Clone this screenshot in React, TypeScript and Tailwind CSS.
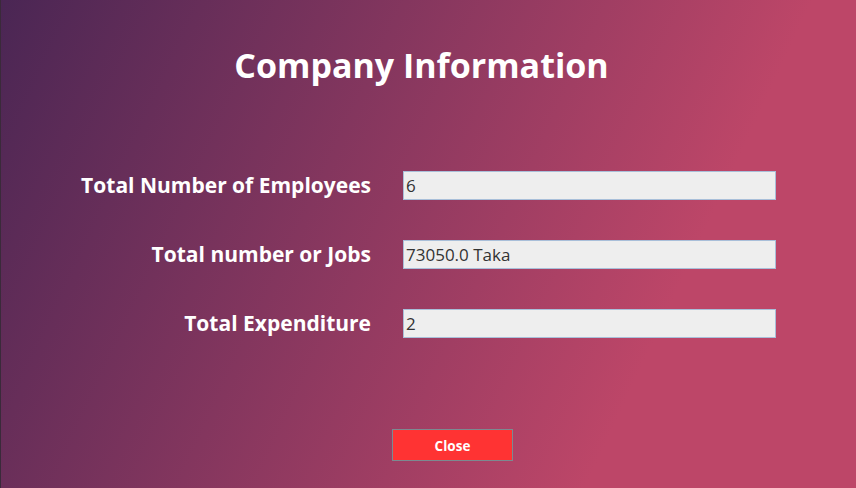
import React from "react";

const font = { fontFamily: '"Open Sans", "Noto Sans", sans-serif' };

function Row({ label, value }: { label: string; value: string }) {
  return (
    <div className="flex items-center h-[29px]">
      <div className="w-[370px] text-right text-white font-bold text-[21px] leading-none tracking-[0px]">
        {label}
      </div>
      <div className="ml-[32px] w-[373px] h-[29px] bg-[#eeeeee] border border-[#a9bfd9] flex items-center pl-[2px] text-[17px] text-[#333333]">
        {value}
      </div>
    </div>
  );
}

export default function App() {
  return (
    <div
      className="w-[856px] h-[488px] overflow-hidden border-l border-[#3a2a3a] bg-[linear-gradient(115deg,#4a2654_0%,#bd4668_75%)] flex flex-col"
      style={font}
    >
      <div className="mt-[42px] h-[46px] flex justify-center pr-[14px]">
        <h1 className="text-white font-bold text-[34px] leading-[46px] tracking-[0px]">
          Company Information
        </h1>
      </div>
      <div className="mt-[83px] flex flex-col gap-[40px]">
        <Row label="Total Number of Employees" value="6" />
        <Row label="Total number or Jobs" value="73050.0 Taka" />
        <Row label="Total Expenditure" value="2" />
      </div>
      <div className="mt-[91px] flex">
        <button className="ml-[391px] w-[121px] h-[32px] pt-[2px] bg-[#ff3333] border border-[#7b8a91] text-white font-bold text-[13.5px]">
          Close
        </button>
      </div>
    </div>
  );
}
